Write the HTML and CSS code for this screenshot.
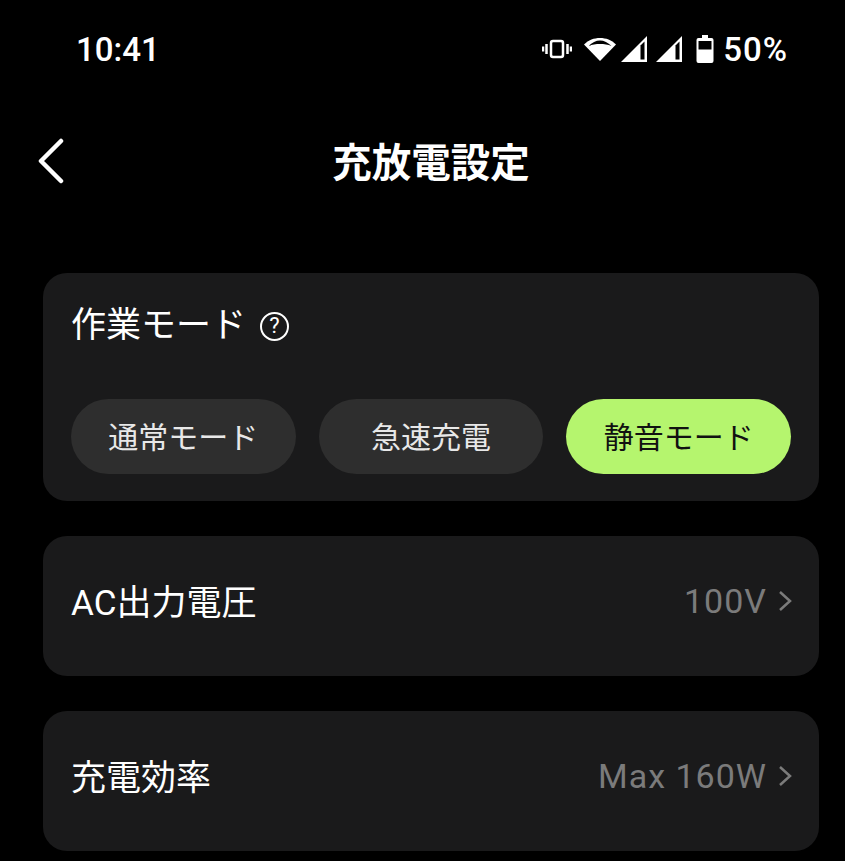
FILE: index.html
```html
<!DOCTYPE html>
<html lang="ja">
<head>
    <meta charset="UTF-8">
    <meta name="viewport" content="width=device-width, initial-scale=1.0">
    <title>充放電設定</title>
    <link rel="stylesheet" href="styles.css">
</head>
<body>

    <!-- Status bar -->
    <div class="status-bar">
        <span class="clock">10:41</span>
        <div class="status-icons">
            <svg class="icon-vibrate" viewBox="0 0 30 20" width="30" height="20">
                <rect x="9" y="2" width="12" height="16" rx="2" fill="none" stroke="#fff" stroke-width="2.500"/>
                <path d="M4.500 5v10M1 7.500v5M25.500 5v10M29 7.500v5" stroke="#fff" stroke-width="2.500" fill="none"/>
            </svg>
            <svg class="icon-wifi" viewBox="0 0 34 26" width="34" height="26">
                <path d="M1 8.500C5.500 4 11 2 17 2s11.500 2 16 6.500L17 25z" fill="#fff"/>
                <path d="M5.500 10C9 6.500 13 4.500 17 4.500s8 2 11.500 5.500C25 8.500 21 8 17 8s-8 .5-11.500 2z" fill="#000"/>
            </svg>
            <svg class="icon-signal" viewBox="0 0 28 28" width="28" height="28">
                <path d="M1 27L27 1v26z" fill="#fff"/>
                <path d="M20.500 10.500l4-4v18h-4z" fill="#000"/>
            </svg>
            <svg class="icon-signal second" viewBox="0 0 28 28" width="28" height="28">
                <path d="M1 27L27 1v26z" fill="#fff"/>
                <path d="M20.500 10.500l4-4v18h-4z" fill="#000"/>
            </svg>
            <svg class="icon-battery" viewBox="0 0 18 28" width="18" height="28">
                <path d="M6 0h6v3h3.500a2 2 0 0 1 2 2v21a2 2 0 0 1-2 2h-13a2 2 0 0 1-2-2V5a2 2 0 0 1 2-2H6z" fill="#fff"/>
                <path d="M2.500 6h13v8.500h-13z" fill="#000"/>
            </svg>
            <span class="battery-text">50%</span>
        </div>
    </div>

    <!-- Header -->
    <div class="header">
        <svg class="back-icon" viewBox="0 0 28 46" width="28" height="46">
            <path d="M24 3L4 23l20 20" fill="none" stroke="#fff" stroke-width="4.500" stroke-linecap="round" stroke-linejoin="round"/>
        </svg>
        <h1>充放電設定</h1>
    </div>

    <div class="content">
        <!-- Work mode -->
        <div class="card mode-card">
            <div class="mode-title">
                <span>作業モード</span>
                <span class="help-icon">?</span>
            </div>
            <div class="mode-buttons">
                <div class="mode-button">通常モード</div>
                <div class="mode-button">急速充電</div>
                <div class="mode-button active">静音モード</div>
            </div>
        </div>

        <div class="card row-card">
            <span class="row-label">AC出力電圧</span>
            <div class="row-value">
                <span>100V</span>
                <svg viewBox="0 0 14 22" width="14" height="22"><path d="M2 2l10 9-10 9" fill="none" stroke="#7b7b7b" stroke-width="2.500"/></svg>
            </div>
        </div>

        <div class="card row-card">
            <span class="row-label">充電効率</span>
            <div class="row-value">
                <span>Max 160W</span>
                <svg viewBox="0 0 14 22" width="14" height="22"><path d="M2 2l10 9-10 9" fill="none" stroke="#7b7b7b" stroke-width="2.500"/></svg>
            </div>
        </div>
    </div>

</body>
</html>
```

FILE: styles.css
```css
* {
    margin: 0;
    padding: 0;
    box-sizing: border-box;
    font-family: Roboto, "Noto Sans CJK JP", sans-serif;
}

html, body {
    height: 100%;
    overflow: hidden;
}

body {
    background-color: #000;
    color: #fff;
}

.status-bar {
    display: flex;
    justify-content: space-between;
    align-items: center;
    height: 98px;
    padding: 0 57px 0 76px;
}

.clock {
    font-size: 33px;
    font-weight: 500;
}

.status-icons {
    display: flex;
    align-items: center;
}

.icon-wifi {
    margin-left: 11px;
}

.icon-signal {
    margin-left: 3px;
}

.icon-signal.second {
    margin-left: 7px;
}

.icon-battery {
    margin-left: 13px;
}

.battery-text {
    margin-left: 9px;
    font-size: 33px;
    font-weight: 500;
    letter-spacing: 1px;
}

.header {
    position: relative;
    height: 130px;
    display: flex;
    align-items: flex-start;
    justify-content: center;
    padding: 39px 0 0 17px;
}

.back-icon {
    position: absolute;
    left: 37px;
    top: 40px;
}

h1 {
    font-size: 39.500px;
    font-weight: 700;
    line-height: 54px;
}

.content {
    display: flex;
    flex-direction: column;
    gap: 35px;
    margin: 45px 26px 0 43px;
}

.card {
    background-color: #1a1a1b;
    border-radius: 24px;
}

.mode-card {
    height: 228px;
    padding: 28px 28px 0;
}

.mode-title {
    display: flex;
    align-items: center;
    gap: 14px;
    font-size: 35px;
    line-height: 50px;
}

.help-icon {
    width: 29px;
    height: 29px;
    border: 2.500px solid #fff;
    border-radius: 50%;
    display: flex;
    align-items: center;
    justify-content: center;
    font-size: 22px;
    line-height: 1;
}

.mode-buttons {
    display: flex;
    gap: 23px;
    margin-top: 48px;
}

.mode-button {
    flex: 1;
    height: 75px;
    padding-bottom: 3px;
    border-radius: 38px;
    background-color: #2e2e2e;
    display: flex;
    align-items: center;
    justify-content: center;
    font-size: 30px;
    color: #e8e8e8;
}

.mode-button.active {
    background-color: #b5f56e;
    color: #111;
}

.row-card {
    height: 140px;
    padding: 0 27px 11px 28px;
    display: flex;
    align-items: center;
    justify-content: space-between;
    font-size: 35px;
}

.row-label {
    padding-bottom: 3px;
}

.row-value {
    display: flex;
    align-items: center;
    gap: 11px;
    color: #7b7b7b;
    font-size: 34px;
    letter-spacing: 1px;
}
```
